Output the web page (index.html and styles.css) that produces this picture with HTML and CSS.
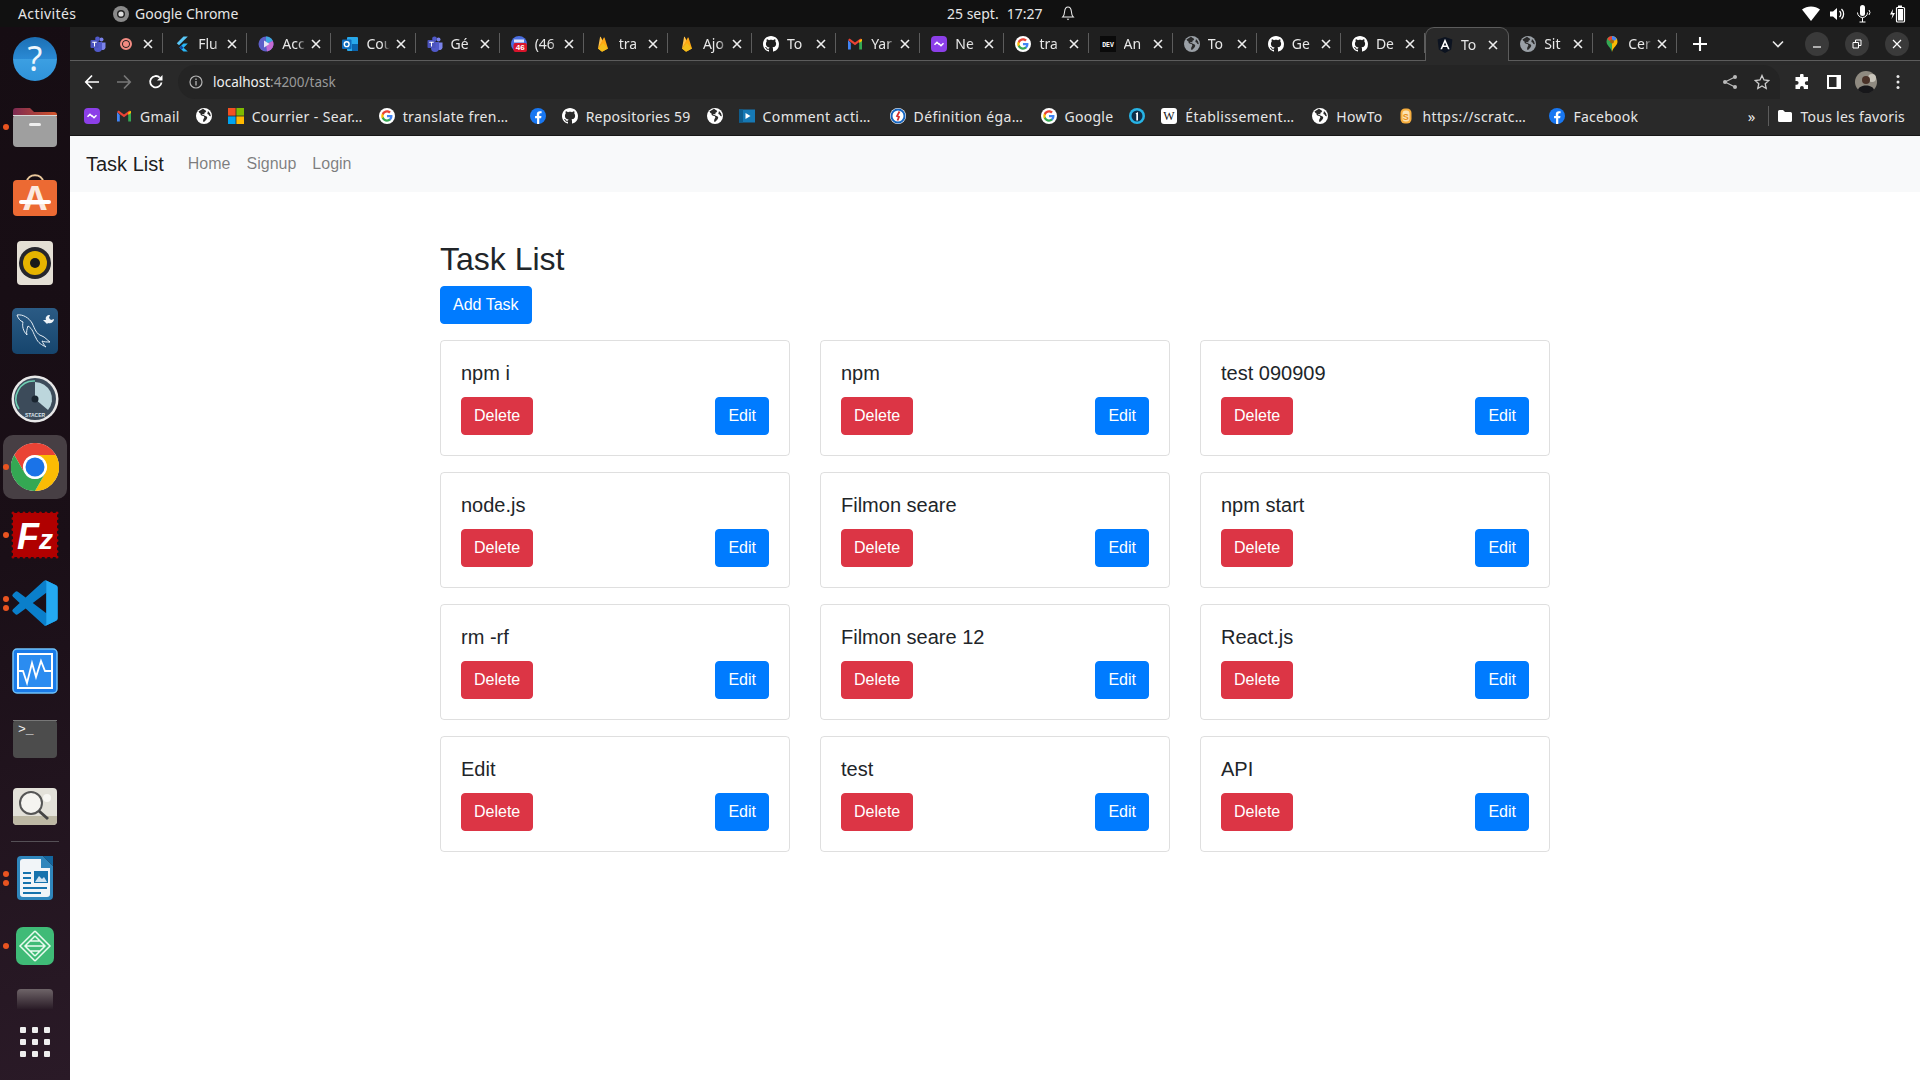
FILE: index.html
```html
<!DOCTYPE html>
<html lang="fr">
<head>
  <meta charset="UTF-8" />
  <title>Task List</title>
  <link rel="stylesheet" href="styles.css">
</head>
<body>
  <!-- favicon sprite -->
  <svg class="sprite" aria-hidden="true">
    <symbol id="i-teams" viewBox="0 0 16 16">
      <circle cx="11.5" cy="3.5" r="2" fill="#7b83eb"/><path d="M9 6.5h6.5v5a2.8 2.8 0 0 1-5 1.5z" fill="#7b83eb"/>
      <circle cx="7.5" cy="3" r="2.4" fill="#5059c9"/><path d="M4 6h8v6a4 4 0 0 1-8 0z" fill="#5059c9"/>
      <rect x="0.5" y="4" width="8" height="8" rx="1" fill="#4b53bc"/><path d="M2.3 5.8h4.4v1H5v3.8H4V6.8H2.3z" fill="#fff"/>
    </symbol>
    <symbol id="i-flutter" viewBox="0 0 16 16">
      <path d="M9.5.5h4.3L5 9.3 2.8 7.2z" fill="#5ac8f8"/><path d="M9.5 7.5h4.3L9.6 11.7l4.2 3.8H9.5L5.3 11.6z" fill="#29b6f6"/><path d="M7.4 9.6 9.6 11.7 7.4 13.8 5.3 11.6z" fill="#0d47a1"/>
    </symbol>
    <symbol id="i-copilot" viewBox="0 0 16 16">
      <circle cx="8" cy="8" r="7.5" fill="#5e5fc8"/><path d="M8 .5a7.5 7.5 0 0 1 6.9 4.6L8 8z" fill="#3fa7e0"/><path d="M14.9 5.1A7.5 7.5 0 0 1 9 15.4L8 8z" fill="#c56bd4"/><path d="M6 4.5 11.5 8 6 11.5z" fill="#e6e6f5"/>
    </symbol>
    <symbol id="i-outlook" viewBox="0 0 16 16">
      <rect x="5" y="1" width="11" height="14" rx="1" fill="#28a8ea"/><rect x="10" y="8" width="6" height="7" fill="#0a64ad"/>
      <rect x="0" y="3.5" width="9.5" height="9.5" rx="1" fill="#0f6cbd"/><circle cx="4.7" cy="8.2" r="2.4" fill="none" stroke="#fff" stroke-width="1.4"/>
    </symbol>
    <symbol id="i-cal" viewBox="0 0 16 16">
      <circle cx="8" cy="8" r="8" fill="#4a6ee0"/><rect x="3" y="3.5" width="10" height="3" fill="#dfe6fb"/><rect x="2.5" y="7" width="13.5" height="9" rx="2" fill="#d9142b"/>
      <text x="9.2" y="14.4" class="svg-num">46</text>
    </symbol>
    <symbol id="i-fire" viewBox="0 0 16 16">
      <path d="M3 12.5 5 1.2c.1-.4.6-.5.8-.1L8 5.2 3 12.5z" fill="#ffc24a"/><path d="M3 12.5 8.7 1.8c.2-.4.7-.4.9 0l3.4 10.7-5 2.8a1.6 1.6 0 0 1-1.6 0z" fill="#ffa712"/><path d="M3 12.5 8 7l5 5.5-5 2.8a1.6 1.6 0 0 1-1.6 0z" fill="#f4bd1b"/>
    </symbol>
    <symbol id="i-github" viewBox="0 0 16 16">
      <path fill="#fff" d="M8 0C3.58 0 0 3.58 0 8c0 3.54 2.29 6.53 5.47 7.59.4.07.55-.17.55-.38 0-.19-.01-.82-.01-1.49-2.01.37-2.53-.49-2.69-.94-.09-.23-.48-.94-.82-1.13-.28-.15-.68-.52-.01-.53.63-.01 1.08.58 1.23.82.72 1.21 1.87.87 2.33.66.07-.52.28-.87.51-1.07-1.78-.2-3.64-.89-3.64-3.95 0-.87.31-1.59.82-2.15-.08-.2-.36-1.02.08-2.12 0 0 .67-.21 2.2.82.64-.18 1.32-.27 2-.27.68 0 1.36.09 2 .27 1.53-1.04 2.2-.82 2.2-.82.44 1.1.16 1.92.08 2.12.51.56.82 1.27.82 2.15 0 3.07-1.87 3.75-3.65 3.95.29.25.54.73.54 1.48 0 1.07-.01 1.93-.01 2.2 0 .21.15.46.55.38A8.013 8.013 0 0016 8c0-4.42-3.58-8-8-8z"/>
    </symbol>
    <symbol id="i-gmail" viewBox="0 0 16 16">
      <path d="M1 4v9.5h2.8V7z" fill="#4285f4"/><path d="M12.2 7v6.5H15V4z" fill="#34a853"/><path d="M1 4l7 5.3L15 4l-1.6-1.5L8 6.5 2.6 2.5z" fill="#ea4335"/><path d="M12.2 4.5 15 2.8V5l-2.8 2z" fill="#fbbc04"/>
    </symbol>
    <symbol id="i-nexus" viewBox="0 0 16 16">
      <rect width="16" height="16" rx="4" fill="#8c3fe8"/><path d="M3.5 8.8 6 6.3l2.5 2.4M7.5 7.3 10 9.7l2.5-2.5" fill="none" stroke="#fff" stroke-width="1.5"/>
    </symbol>
    <symbol id="i-google" viewBox="0 0 24 24">
      <circle cx="12" cy="12" r="12" fill="#fff"/>
      <g transform="translate(2.6 2.6) scale(.78)">
        <path d="M22.56 12.25c0-.78-.07-1.53-.2-2.25H12v4.26h5.92c-.26 1.37-1.04 2.53-2.21 3.31v2.77h3.57c2.08-1.92 3.28-4.74 3.28-8.09z" fill="#4285f4"/>
        <path d="M12 23c2.97 0 5.46-.98 7.28-2.66l-3.57-2.77c-.98.66-2.23 1.06-3.71 1.06-2.86 0-5.29-1.93-6.16-4.53H2.18v2.84C3.99 20.53 7.7 23 12 23z" fill="#34a853"/>
        <path d="M5.84 14.09c-.22-.66-.35-1.36-.35-2.09s.13-1.43.35-2.09V7.07H2.18C1.43 8.55 1 10.22 1 12s.43 3.45 1.18 4.93l3.66-2.84z" fill="#fbbc05"/>
        <path d="M12 5.38c1.62 0 3.06.56 4.21 1.64l3.15-3.15C17.45 2.09 14.97 1 12 1 7.7 1 3.99 3.47 2.18 7.07l3.66 2.84c.87-2.6 3.3-4.53 6.16-4.53z" fill="#ea4335"/>
      </g>
    </symbol>
    <symbol id="i-dev" viewBox="0 0 16 16">
      <rect width="16" height="16" fill="#0a0a0a"/><text x="8" y="10.6" class="svg-dev">DEV</text>
    </symbol>
    <symbol id="i-globe" viewBox="0 0 16 16">
      <circle cx="8" cy="8" r="8" fill="currentColor"/>
      <path d="M7 .8 4.5 2.2 2.5 3.5 3.5 5l1 .6.2 1.4 1.3.7 1.6.2.8 1.3-.7 1.5-.6 1.2.2 2.2 1.3-.6 2-2.2.7-1.6-.6-1.3-1.8-.7-1.4-.7-1-.2-.4-.8 1.3-.1.5.5.7-.3-.4-1 1.3-.8.8-1.2z" fill="#2a2a2a"/>
      <path d="M12 3l2 2.3.9 3-1.4-.3-1-1.4-1.2-.6z" fill="#2a2a2a"/>
    </symbol>
    <symbol id="i-angular" viewBox="0 0 16 16">
      <path d="M8 0 .6 2.6 1.8 12.4 8 16l6.2-3.6 1.2-9.8z" fill="#0c1320"/>
      <path d="M8 1.8 3.4 12.2h1.7l.9-2.3h4l.9 2.3h1.7zM8 5.6l1.3 3H6.7z" fill="#fff"/>
    </symbol>
    <symbol id="i-maps" viewBox="0 0 16 16">
      <path d="M8 0a5.5 5.5 0 0 1 5.5 5.5C13.5 9.5 9.3 11 8 16z" fill="#fbbc04"/>
      <path d="M8 0A5.5 5.5 0 0 0 2.5 5.5C2.5 9.5 6.7 11 8 16z" fill="#34a853"/>
      <path d="M3.3 2.7A5.5 5.5 0 0 1 8 0l.5 3.3-3.2 1.7z" fill="#ea4335"/>
      <path d="M8 0a5.5 5.5 0 0 1 4.8 2.9L9.8 5 8 3.4z" fill="#4285f4"/>
      <circle cx="8" cy="5.5" r="2" fill="#a3660f"/>
    </symbol>
    <symbol id="i-ms" viewBox="0 0 16 16">
      <rect width="7.6" height="7.6" fill="#f25022"/><rect x="8.4" width="7.6" height="7.6" fill="#7fba00"/><rect y="8.4" width="7.6" height="7.6" fill="#00a4ef"/><rect x="8.4" y="8.4" width="7.6" height="7.6" fill="#ffb900"/>
    </symbol>
    <symbol id="i-fb" viewBox="0 0 24 24">
      <circle cx="12" cy="12" r="12" fill="#1877f2"/>
      <path d="M16.7 15.5l.5-3.5h-3.3V9.8c0-1 .5-1.9 2-1.9h1.5v-3s-1.4-.2-2.7-.2c-2.7 0-4.5 1.6-4.5 4.6V12H7.6v3.5h3V24h3.3v-8.5z" fill="#fff"/>
    </symbol>
    <symbol id="i-media" viewBox="0 0 16 16">
      <rect y="1.5" width="16" height="13" fill="#1679b5"/><rect y="1.5" width="4" height="13" fill="#0e5c8c"/><path d="M6.5 5l5 3-5 3z" fill="#fff"/>
    </symbol>
    <symbol id="i-def" viewBox="0 0 16 16">
      <circle cx="8" cy="8" r="8" fill="#fff"/><circle cx="8" cy="8" r="6.5" fill="none" stroke="#1565c0" stroke-width="2"/><path d="M9.5 3.5 7 8l2 1-1.5 3.5" fill="none" stroke="#d32f2f" stroke-width="1.8"/>
    </symbol>
    <symbol id="i-one" viewBox="0 0 16 16">
      <circle cx="8" cy="8" r="8" fill="#27b4e6"/><circle cx="8" cy="8" r="5.5" fill="#0f2f4a"/><path d="M6.5 5.5 9 4v8.5H7.3V6.3z" fill="#fff"/>
    </symbol>
    <symbol id="i-wiki" viewBox="0 0 16 16">
      <rect width="16" height="16" rx="3" fill="#fff"/><text x="8" y="12" class="svg-wiki">W</text>
    </symbol>
    <symbol id="i-scratch" viewBox="0 0 16 16">
      <rect x="2.5" y=".5" width="11" height="15" rx="4.5" fill="#f7ae3f"/><rect x="4.5" y="2.5" width="7" height="11" rx="3" fill="#fbe3b3"/><text x="8" y="11.6" class="svg-s">S</text>
    </symbol>
    <symbol id="i-x" viewBox="0 0 10 10">
      <path d="M1 1l8 8M9 1l-8 8" fill="none" stroke="currentColor" stroke-width="1.6"/>
    </symbol>
  </svg>

  <header class="topbar">
    <div class="top-left">
      <span class="activities">Activités</span>
      <svg class="app-badge" viewBox="0 0 16 16"><circle cx="8" cy="8" r="8" fill="#8a8a8a"/><circle cx="8" cy="8" r="4" fill="#222"/><circle cx="8" cy="8" r="2.6" fill="#dcdcdc"/></svg>
      <span>Google Chrome</span>
    </div>
    <div class="clock">
      <span>25 sept.</span>
      <span>17:27</span>
      <svg class="bell" viewBox="0 0 16 18"><path d="M8 1.500c-2.800 0-3.600 2.500-3.800 5-.2 2.500-.6 5-2.200 6.500h12c-1.600-1.500-2-4-2.200-6.500-.2-2.500-1-5-3.800-5z" fill="none" stroke="#eee" stroke-width="1.2"/><path d="M6.500 15h3l-1.500 1.800z" fill="#eee"/></svg>
    </div>
    <div class="tray">
      <svg viewBox="0 0 18 16"><path d="M0 3.500C5 -.5 13 -.5 18 3.500L9 15z" fill="#fff"/></svg>
      <svg viewBox="0 0 18 16"><path d="M1 5.500h3L8 2v12l-4-3.500H1z" fill="#fff"/><path d="M10.500 5a4 4 0 0 1 0 6M12.500 3a7 7 0 0 1 0 10" fill="none" stroke="#fff" stroke-width="1.3"/></svg>
      <svg viewBox="0 0 18 18"><rect x="4" y="0" width="5" height="11" rx="2.5" fill="#fff"/><path d="M1.500 7.500a5 5 0 0 0 10 0M6.500 13v4M3.500 17h6M13 5a4 4 0 0 1 0 5" fill="none" stroke="#fff" stroke-width="1"/></svg>
      <svg viewBox="0 0 18 18"><path d="M4 4 1 9.500h2.500L2.500 14l3.500-6H3.500z" fill="#fff"/><rect x="9" y="0.5" width="4" height="2" fill="#fff"/><rect x="7.5" y="2.5" width="8" height="14.5" rx="1" fill="none" stroke="#fff" stroke-width="1.2"/><rect x="9" y="4" width="5" height="11.5" fill="#fff"/></svg>
    </div>
  </header>

  <div class="desktop">
    <nav class="dock">
      <div class="dock-item">
        <svg viewBox="0 0 48 48"><defs><linearGradient id="g-help" x1="0" y1="0" x2="0" y2="1"><stop offset="0" stop-color="#1c6fb4"/><stop offset=".5" stop-color="#2a8ad4"/><stop offset=".5" stop-color="#3c9fe2"/><stop offset="1" stop-color="#2f93da"/></linearGradient></defs><circle cx="24" cy="24" r="22" fill="url(#g-help)"/><text x="24" y="36" class="svg-help">?</text></svg>
      </div>
      <div class="dock-item running">
        <svg viewBox="0 0 48 48"><defs><linearGradient id="g-fold" x1="0" y1="0" x2="1" y2="0"><stop offset="0" stop-color="#7d2a52"/><stop offset="1" stop-color="#d4552a"/></linearGradient></defs><path d="M2 8a3 3 0 0 1 3-3h14l4 4h20a3 3 0 0 1 3 3v14H2z" fill="url(#g-fold)"/><rect x="2" y="12" width="44" height="32" rx="4" fill="#9f9f9f"/><rect x="2" y="12" width="44" height="1" fill="#d8d8d8"/><rect x="18" y="20" width="12" height="3" rx="1.5" fill="#efefef"/></svg>
      </div>
      <div class="dock-item">
        <svg viewBox="0 0 48 48"><path d="M16 11c0-9 16-9 16 0" fill="none" stroke="#e9c79b" stroke-width="2"/><rect x="2" y="9" width="44" height="36" rx="4" fill="#ec6a33"/><text x="24" y="39" class="svg-soft">A</text><rect x="8" y="29" width="32" height="4" rx="2" fill="#fff"/></svg>
      </div>
      <div class="dock-item">
        <svg viewBox="0 0 48 48"><rect x="6" y="2" width="36" height="44" rx="4" fill="#e4dfd5"/><circle cx="24" cy="24" r="16" fill="#26262c"/><circle cx="24" cy="24" r="12" fill="#e6b400"/><circle cx="24" cy="24" r="5" fill="#1a1a1a"/></svg>
      </div>
      <div class="dock-item">
        <svg viewBox="0 0 48 48"><defs><linearGradient id="g-my" x1="0" y1="0" x2="0" y2="1"><stop offset="0" stop-color="#2b5b85"/><stop offset="1" stop-color="#16456d"/></linearGradient></defs><rect x="1" y="1" width="46" height="46" rx="5" fill="url(#g-my)"/><path d="M6 8c6-1 12 3 15 8 3 6 4 11 10 13 3 1 5 4 8 6-3 0-6 0-8-1 1 2 2 4 4 6-4-2-8-4-10-9-3-5-3-9-8-12-1 3-2 6-1 9-4-4-5-9-4-13-3-1-5-4-6-7z" fill="none" stroke="#e6eef4" stroke-width="1"/><path d="M32 13l4 4 1-1c3 1 6-1 6-4l-3 1-2-2 1-3c-3 0-5 2-4 5z" fill="#eef3f7"/></svg>
      </div>
      <div class="dock-item">
        <svg viewBox="0 0 48 48"><circle cx="24" cy="24" r="23.5" fill="#e8e8e8"/><circle cx="24" cy="24" r="21" fill="#3c4b5a"/><path d="M8 34A18 18 0 0 1 24 6" fill="none" stroke="#6fd0b4" stroke-width="1.6"/><path d="M24 24 24 7a17 17 0 0 1 13 28z" fill="#bcd6dc"/><circle cx="24" cy="24" r="3.5" fill="#1a2530"/><text x="24" y="42" class="svg-stacer">STACER</text></svg>
      </div>
      <div class="dock-item running active">
        <svg viewBox="0 0 48 48"><circle cx="24" cy="24" r="24" fill="#fff"/><path d="M3.2 12A24 24 0 0 1 44.8 12H24a12 12 0 0 0-10.4 18z" fill="#ea4335"/><path d="M3.2 12A24 24 0 0 1 44.8 12H24a12 12 0 0 0-10.4 18z" fill="#fbbc04" transform="rotate(120 24 24)"/><path d="M3.2 12A24 24 0 0 1 44.8 12H24a12 12 0 0 0-10.4 18z" fill="#34a853" transform="rotate(240 24 24)"/><circle cx="24" cy="24" r="11.5" fill="#fff"/><circle cx="24" cy="24" r="9.5" fill="#1a73e8"/></svg>
      </div>
      <div class="dock-item running">
        <svg viewBox="0 0 48 48"><rect x="2" y="2" width="44" height="44" fill="#a80000" stroke="#a80000" stroke-width="3" stroke-dasharray="0 5.5" stroke-linecap="round"/><rect x="2" y="2" width="44" height="44" fill="#b00000"/><text x="6" y="38" class="svg-fz">F<tspan class="svg-fz-small">z</tspan></text></svg>
      </div>
      <div class="dock-item running double">
        <svg viewBox="-3 -3 106 106"><path d="M96.5 10.8 75.9.9a6.2 6.2 0 0 0-7.1 1.2L29.3 38.1 12.1 25a4.2 4.2 0 0 0-5.3.2L1.4 30.2a4.2 4.2 0 0 0 0 6.2L16.2 50 1.4 63.6a4.2 4.2 0 0 0 0 6.2l5.5 5a4.2 4.2 0 0 0 5.3.2l17.2-13.1 39.5 36a6.2 6.2 0 0 0 7.1 1.2l20.6-9.9A6.2 6.2 0 0 0 100 83.6V16.4a6.2 6.2 0 0 0-3.5-5.6zM75 72.7 45.1 50 75 27.3z" fill="#0a7fcb"/><path d="M75.9.9 96.5 10.8A6.2 6.2 0 0 1 100 16.4v67.2a6.2 6.2 0 0 1-3.5 5.6L75.9 99.1a6.2 6.2 0 0 1-7.1-1.2C71 100 75 98.5 75 95.5v-91C75 1.5 71 0 68.8 2.1A6.2 6.2 0 0 1 75.9.9z" fill="#24a9f2"/></svg>
      </div>
      <div class="dock-item">
        <svg viewBox="0 0 48 48"><rect x="2" y="2" width="44" height="44" rx="4" fill="#1a7be8" stroke="#6fc2fb" stroke-width="1.5"/><rect x="6" y="6" width="36" height="36" fill="#fff"/><rect x="8" y="8" width="32" height="32" fill="#2b8cf0"/><path d="M8 24h4l4 12 5-20 4 14 5-16 4 10h6" fill="none" stroke="#fff" stroke-width="1.8"/></svg>
      </div>
      <div class="dock-item">
        <svg viewBox="0 0 48 48"><rect x="2" y="5" width="44" height="38" rx="4" fill="#4c4c4c"/><rect x="2" y="5" width="44" height="1" fill="#777"/><text x="7" y="18" class="svg-term">&gt;_</text></svg>
      </div>
      <div class="dock-item">
        <svg viewBox="0 0 48 48"><rect x="2" y="5" width="44" height="37" rx="4" fill="#e3e1d9"/><path d="M2 33h44v5a4 4 0 0 1-4 4H6a4 4 0 0 1-4-4z" fill="#bdb8a4"/><circle cx="36" cy="15" r="4" fill="#f7f6f2"/><circle cx="20" cy="20" r="11" fill="#f5f4f0" stroke="#555" stroke-width="2"/><path d="M28 28l9 8" stroke="#444" stroke-width="3"/></svg>
      </div>
      <div class="dock-sep"></div>
      <div class="dock-item running double">
        <svg viewBox="0 0 48 48"><path d="M6 6a4 4 0 0 1 4-4h22l10 10v30a4 4 0 0 1-4 4H10a4 4 0 0 1-4-4z" fill="#2f86bc"/><path d="M9 8a3 3 0 0 1 3-3h18v9h9v26a3 3 0 0 1-3 3H12a3 3 0 0 1-3-3z" fill="#f1f5f8"/><path d="M32 2h10v10z" fill="#13669e"/><path d="M12 18h8v2h-8zM12 23h8v2h-8zM12 28h8v2h-8zM12 33h24v2H12zM12 38h18v2H12z" fill="#1673ad"/><rect x="23" y="17" width="14" height="12" fill="#1673ad"/><path d="M24 28l4-6 3 3 2-2 3 5z" fill="#cfe3f1"/></svg>
      </div>
      <div class="dock-item running">
        <svg viewBox="0 0 48 48"><rect x="5" y="5" width="38" height="38" rx="7" fill="#3fbb77"/><path d="M24 9 9 24l15 15M24 9l15 15-15 15M19 19h10M15 24h18M19 29h10M24 14 14 24l10 10M24 14l10 10-10 10" fill="none" stroke="#eafbf1" stroke-width="1.5"/></svg>
      </div>
      <div class="dock-item short">
        <svg viewBox="0 0 48 28"><defs><linearGradient id="g-drive" x1="0" y1="0" x2="0" y2="1"><stop offset="0" stop-color="#6e6468"/><stop offset="1" stop-color="#2a1c27"/></linearGradient></defs><path d="M6 22V6a4 4 0 0 1 4-4h28a4 4 0 0 1 4 4v16z" fill="url(#g-drive)"/></svg>
      </div>
      <div class="dock-grid">
        <i></i><i></i><i></i><i></i><i></i><i></i><i></i><i></i><i></i>
      </div>
    </nav>

    <div class="window">
      <div class="tabstrip">
        <div class="tab"><svg class="fav"><use href="#i-teams"/></svg><span class="rec"></span><svg class="tab-x"><use href="#i-x"/></svg></div>
        <div class="tab"><svg class="fav"><use href="#i-flutter"/></svg><span class="tab-title">Flu</span><svg class="tab-x"><use href="#i-x"/></svg></div>
        <div class="tab"><svg class="fav"><use href="#i-copilot"/></svg><span class="tab-title">Acc</span><svg class="tab-x"><use href="#i-x"/></svg></div>
        <div class="tab"><svg class="fav"><use href="#i-outlook"/></svg><span class="tab-title">Cou</span><svg class="tab-x"><use href="#i-x"/></svg></div>
        <div class="tab"><svg class="fav"><use href="#i-teams"/></svg><span class="tab-title">Gé</span><svg class="tab-x"><use href="#i-x"/></svg></div>
        <div class="tab"><svg class="fav"><use href="#i-cal"/></svg><span class="tab-title">(46</span><svg class="tab-x"><use href="#i-x"/></svg></div>
        <div class="tab"><svg class="fav"><use href="#i-fire"/></svg><span class="tab-title">tra</span><svg class="tab-x"><use href="#i-x"/></svg></div>
        <div class="tab"><svg class="fav"><use href="#i-fire"/></svg><span class="tab-title">Ajo</span><svg class="tab-x"><use href="#i-x"/></svg></div>
        <div class="tab"><svg class="fav"><use href="#i-github"/></svg><span class="tab-title">To</span><svg class="tab-x"><use href="#i-x"/></svg></div>
        <div class="tab"><svg class="fav"><use href="#i-gmail"/></svg><span class="tab-title">Yar</span><svg class="tab-x"><use href="#i-x"/></svg></div>
        <div class="tab"><svg class="fav"><use href="#i-nexus"/></svg><span class="tab-title">Ne</span><svg class="tab-x"><use href="#i-x"/></svg></div>
        <div class="tab"><svg class="fav"><use href="#i-google"/></svg><span class="tab-title">tra</span><svg class="tab-x"><use href="#i-x"/></svg></div>
        <div class="tab"><svg class="fav"><use href="#i-dev"/></svg><span class="tab-title">An</span><svg class="tab-x"><use href="#i-x"/></svg></div>
        <div class="tab"><svg class="fav globe-dim"><use href="#i-globe"/></svg><span class="tab-title">To</span><svg class="tab-x"><use href="#i-x"/></svg></div>
        <div class="tab"><svg class="fav"><use href="#i-github"/></svg><span class="tab-title">Ge</span><svg class="tab-x"><use href="#i-x"/></svg></div>
        <div class="tab"><svg class="fav"><use href="#i-github"/></svg><span class="tab-title">De</span><svg class="tab-x"><use href="#i-x"/></svg></div>
        <div class="tab active"><svg class="fav"><use href="#i-angular"/></svg><span class="tab-title">To</span><svg class="tab-x"><use href="#i-x"/></svg></div>
        <div class="tab"><svg class="fav globe-dim"><use href="#i-globe"/></svg><span class="tab-title">Sit</span><svg class="tab-x"><use href="#i-x"/></svg></div>
        <div class="tab"><svg class="fav"><use href="#i-maps"/></svg><span class="tab-title">Cer</span><svg class="tab-x"><use href="#i-x"/></svg></div>
        <svg class="new-tab" viewBox="0 0 12 12"><path d="M6 0v12M0 6h12" stroke="#fff" stroke-width="1.8"/></svg>
        <div class="win-controls">
          <svg class="tab-list" viewBox="0 0 12 8"><path d="M1 1.500 6 6.500l5-5" fill="none" stroke="#e8e8e8" stroke-width="1.6"/></svg>
          <span class="win-btn"><svg viewBox="0 0 10 10"><path d="M1 8h8" stroke="#fff" stroke-width="1.2"/></svg></span>
          <span class="win-btn"><svg viewBox="0 0 10 10"><path d="M1 3.500h5.500V9H1zM3.500 3V1H9v5.500H7" fill="none" stroke="#fff" stroke-width="1"/></svg></span>
          <span class="win-btn"><svg viewBox="0 0 10 10"><path d="M1 1l8 8M9 1l-8 8" stroke="#fff" stroke-width="1.2"/></svg></span>
        </div>
      </div>

      <div class="toolbar">
        <svg class="tb-ico" viewBox="0 0 16 16"><path d="M15 8H2M8 1.500 1.800 8 8 14.500" fill="none" stroke="#fff" stroke-width="1.7"/></svg>
        <svg class="tb-ico" viewBox="0 0 16 16"><path d="M1 8h13M8 1.500 14.200 8 8 14.500" fill="none" stroke="#777" stroke-width="1.7"/></svg>
        <svg class="tb-ico" viewBox="0 0 16 16"><path d="M13.500 8.500A5.700 5.700 0 1 1 11.800 3.600" fill="none" stroke="#fff" stroke-width="1.8"/><path d="M14.500 1v5.500H9z" fill="#fff"/></svg>
        <div class="omnibox">
          <svg class="info" viewBox="0 0 14 14"><circle cx="7" cy="7" r="6" fill="none" stroke="#b5b5b5" stroke-width="1.2"/><path d="M7 6v4.500M7 3.500v1.400" stroke="#b5b5b5" stroke-width="1.3"/></svg>
          <span class="url"><b>localhost</b>:4200/task</span>
          <svg class="omni-ico share" viewBox="0 0 16 16"><circle cx="13" cy="3" r="2" fill="#bbb"/><circle cx="3" cy="8" r="2" fill="#bbb"/><circle cx="13" cy="13" r="2" fill="#bbb"/><path d="M13 3 3 8l10 5" fill="none" stroke="#bbb" stroke-width="1.2"/></svg>
          <svg class="omni-ico" viewBox="0 0 16 16"><path d="M8 1.500 10 6l4.800.5-3.600 3.200 1 4.800L8 12l-4.200 2.500 1-4.800L1.200 6.500 6 6z" fill="none" stroke="#ccc" stroke-width="1.3"/></svg>
        </div>
        <div class="tb-right">
          <svg class="tb-ico" viewBox="0 0 16 16"><path d="M6 1.500a1.800 1.800 0 0 1 3.600 0V3H14v4.200h-1.300a1.900 1.900 0 0 0 0 3.800H14v4H9.800v-1.200a1.900 1.900 0 0 0-3.800 0V15H1.500v-4.300h1.200a1.900 1.900 0 0 0 0-3.800H1.500V3H6z" fill="#fff"/></svg>
          <svg class="tb-ico panel-ico" viewBox="0 0 16 16"><path d="M1 1h14v14H1z" fill="#fff"/><rect x="3" y="3" width="7.5" height="10" fill="#292929"/></svg>
          <svg class="avatar" viewBox="0 0 22 22"><circle cx="11" cy="11" r="11" fill="#8f8a80"/><circle cx="17" cy="7" r="4" fill="#c9c5bb"/><circle cx="11" cy="9" r="4" fill="#4a3228"/><path d="M3 19c1-6 15-6 16 0a11 11 0 0 1-16 0z" fill="#17171a"/></svg>
          <svg class="tb-ico dots" viewBox="0 0 4 16"><circle cx="2" cy="2.500" r="1.500" fill="#e8e8e8"/><circle cx="2" cy="8" r="1.500" fill="#e8e8e8"/><circle cx="2" cy="13.500" r="1.500" fill="#e8e8e8"/></svg>
        </div>
      </div>

      <div class="bookmarks">
        <div class="bm"><svg class="fav"><use href="#i-nexus"/></svg></div>
        <div class="bm"><svg class="fav"><use href="#i-gmail"/></svg><span>Gmail</span></div>
        <div class="bm"><svg class="fav globe-white"><use href="#i-globe"/></svg></div>
        <div class="bm long"><svg class="fav"><use href="#i-ms"/></svg><span>Courrier - Sear…</span></div>
        <div class="bm long"><svg class="fav"><use href="#i-google"/></svg><span>translate fren…</span></div>
        <div class="bm"><svg class="fav"><use href="#i-fb"/></svg></div>
        <div class="bm"><svg class="fav"><use href="#i-github"/></svg><span>Repositories 59</span></div>
        <div class="bm"><svg class="fav globe-white"><use href="#i-globe"/></svg></div>
        <div class="bm long"><svg class="fav"><use href="#i-media"/></svg><span>Comment acti…</span></div>
        <div class="bm long"><svg class="fav"><use href="#i-def"/></svg><span>Définition éga…</span></div>
        <div class="bm"><svg class="fav"><use href="#i-google"/></svg><span>Google</span></div>
        <div class="bm"><svg class="fav"><use href="#i-one"/></svg></div>
        <div class="bm long"><svg class="fav"><use href="#i-wiki"/></svg><span>Établissement…</span></div>
        <div class="bm"><svg class="fav globe-white"><use href="#i-globe"/></svg><span>HowTo</span></div>
        <div class="bm long"><svg class="fav"><use href="#i-scratch"/></svg><span>https://scratc…</span></div>
        <div class="bm"><svg class="fav"><use href="#i-fb"/></svg><span>Facebook</span></div>
        <div class="bm-end">
          <span class="more">»</span>
          <span class="bm-sep"></span>
          <div class="bm">
            <svg class="fav" viewBox="0 0 16 16"><path d="M1 3.500A1.500 1.500 0 0 1 2.500 2H6l2 2h5.500A1.500 1.500 0 0 1 15 5.500v7a1.500 1.500 0 0 1-1.500 1.500h-11A1.500 1.500 0 0 1 1 12.500z" fill="#fff"/></svg>
            <span>Tous les favoris</span>
          </div>
        </div>
      </div>

      <main class="page">
        <nav class="navbar">
          <a class="navbar-brand" href="#">Task List</a>
          <a class="nav-link" href="#">Home</a>
          <a class="nav-link" href="#">Signup</a>
          <a class="nav-link" href="#">Login</a>
        </nav>
        <section class="container">
          <h2>Task List</h2>
          <button class="btn btn-primary">Add Task</button>
          <div class="task-grid">
            <div class="card"><h5>npm i</h5><div class="card-actions"><button class="btn btn-danger">Delete</button><button class="btn btn-primary">Edit</button></div></div>
            <div class="card"><h5>npm</h5><div class="card-actions"><button class="btn btn-danger">Delete</button><button class="btn btn-primary">Edit</button></div></div>
            <div class="card"><h5>test 090909</h5><div class="card-actions"><button class="btn btn-danger">Delete</button><button class="btn btn-primary">Edit</button></div></div>
            <div class="card"><h5>node.js</h5><div class="card-actions"><button class="btn btn-danger">Delete</button><button class="btn btn-primary">Edit</button></div></div>
            <div class="card"><h5>Filmon seare</h5><div class="card-actions"><button class="btn btn-danger">Delete</button><button class="btn btn-primary">Edit</button></div></div>
            <div class="card"><h5>npm start</h5><div class="card-actions"><button class="btn btn-danger">Delete</button><button class="btn btn-primary">Edit</button></div></div>
            <div class="card"><h5>rm -rf</h5><div class="card-actions"><button class="btn btn-danger">Delete</button><button class="btn btn-primary">Edit</button></div></div>
            <div class="card"><h5>Filmon seare 12</h5><div class="card-actions"><button class="btn btn-danger">Delete</button><button class="btn btn-primary">Edit</button></div></div>
            <div class="card"><h5>React.js</h5><div class="card-actions"><button class="btn btn-danger">Delete</button><button class="btn btn-primary">Edit</button></div></div>
            <div class="card"><h5>Edit</h5><div class="card-actions"><button class="btn btn-danger">Delete</button><button class="btn btn-primary">Edit</button></div></div>
            <div class="card"><h5>test</h5><div class="card-actions"><button class="btn btn-danger">Delete</button><button class="btn btn-primary">Edit</button></div></div>
            <div class="card"><h5>API</h5><div class="card-actions"><button class="btn btn-danger">Delete</button><button class="btn btn-primary">Edit</button></div></div>
          </div>
        </section>
      </main>
    </div>
  </div>
</body>
</html>
```

FILE: styles.css
```css
* {
  box-sizing: border-box;
}
html, body {
  height: 100%;
}
body {
  margin: 0;
  overflow: hidden;
  background: #fff;
  color: #212529;
  font-family: "Liberation Sans", Arial, sans-serif;
  font-size: 16px;
}
.sprite {
  display: none;
}

/* system top bar */
.topbar {
  display: flex;
  align-items: center;
  height: 27px;
  background: #111;
  color: #e6e6e6;
  font-family: "Noto Sans", sans-serif;
  font-size: 14px;
}
.top-left {
  display: flex;
  align-items: center;
  width: 947px;
  padding-left: 18px;
}
.activities {
  width: 95px;
  letter-spacing: .4px;
}
.app-badge {
  width: 16px;
  height: 16px;
  margin-right: 6px;
}
.clock {
  display: flex;
  align-items: center;
  gap: 8px;
}
.bell {
  width: 14px;
  height: 17px;
  margin-left: 11px;
}
.tray {
  display: flex;
  align-items: center;
  gap: 9px;
  margin-left: auto;
  padding-right: 13px;
}
.tray svg {
  width: 18px;
  height: 18px;
}
.tray svg:last-child {
  margin-left: 6px;
}

/* dock */
.desktop {
  display: flex;
  height: 1053px;
}
.dock {
  flex: 0 0 70px;
  background: linear-gradient(165deg, #160d13 0%, #1a0f17 50%, #2a1a27 100%);
}
.dock-item {
  position: relative;
  display: flex;
  align-items: center;
  justify-content: center;
  height: 68px;
}
.dock-item:first-child {
  margin-top: -2px;
}
.dock-item svg {
  position: relative;
  width: 48px;
  height: 48px;
}
.dock-item.short {
  height: 42px;
}
.dock-item.short svg {
  height: 28px;
}
.dock-item.active::before {
  content: "";
  position: absolute;
  left: 3px;
  top: 2px;
  width: 64px;
  height: 64px;
  border-radius: 10px;
  background: #473f44;
}
.dock-item.running::after {
  content: "";
  position: absolute;
  left: 3px;
  top: 31px;
  width: 6px;
  height: 6px;
  border-radius: 50%;
  background: #e95420;
}
.dock-item.double::after {
  top: 27px;
  box-shadow: 0 9px 0 #e95420;
}
.dock-sep {
  height: 1px;
  margin: 0 11px 2px;
  background: #555056;
}
.dock-grid {
  display: grid;
  grid-template-columns: repeat(3, 6px);
  gap: 6px;
  justify-content: center;
  padding-top: 5px;
}
.dock-grid i {
  height: 6px;
  border-radius: 1px;
  background: #eee;
}

/* browser */
.window {
  flex: 1;
  min-width: 0;
  display: flex;
  flex-direction: column;
}
.tabstrip {
  display: flex;
  align-items: center;
  height: 34px;
  padding-left: 9px;
  background: #1f1f1f;
  border-bottom: 1px solid #5c5c5c;
  font-family: "Noto Sans", sans-serif;
  font-size: 14px;
  color: #e8e8e8;
}
.tab {
  position: relative;
  display: flex;
  align-items: center;
  flex: 0 0 84.13px;
  height: 33px;
  padding-left: 11px;
}
.tab::after {
  content: "";
  position: absolute;
  right: 0;
  top: 6px;
  height: 20px;
  width: 1px;
  background: #5c5c5c;
}
.tab.active {
  height: 34px;
  margin-bottom: -1px;
  background: #292929;
  border: 1px solid #5c5c5c;
  border-bottom: 0;
  border-radius: 9px 9px 0 0;
  z-index: 1;
}
.tab.active::after {
  display: none;
}
.fav {
  flex: 0 0 16px;
  width: 16px;
  height: 16px;
}
.globe-dim {
  color: #9aa0a6;
}
.globe-white {
  color: #fff;
}
.tab-title {
  width: 27px;
  margin-left: 8px;
  white-space: nowrap;
  -webkit-mask-image: linear-gradient(90deg, #000 16px, transparent 24px);
  mask-image: linear-gradient(90deg, #000 16px, transparent 24px);
}
.rec {
  width: 12px;
  height: 12px;
  margin-left: 14px;
  border-radius: 50%;
  background: #f28b82;
  border: 2px solid #f28b82;
  box-shadow: inset 0 0 0 1px #1f1f1f;
}
.tab-x {
  width: 10px;
  height: 10px;
  margin-left: auto;
  margin-right: 10px;
  color: #eee;
}
.new-tab {
  width: 14px;
  height: 14px;
  margin-left: 16px;
}
.win-controls {
  display: flex;
  align-items: center;
  margin-left: auto;
  padding-right: 11px;
}
.tab-list {
  width: 12px;
  height: 8px;
  margin-right: 21px;
}
.win-btn {
  display: flex;
  align-items: center;
  justify-content: center;
  width: 24px;
  height: 24px;
  margin-left: 16px;
  border-radius: 50%;
  background: #3a3a3a;
}
.tab-list + .win-btn {
  margin-left: 0;
}
.win-btn svg {
  width: 10px;
  height: 10px;
}

.toolbar {
  display: flex;
  align-items: flex-end;
  height: 38px;
  padding-left: 14px;
  background: #292929;
}
.toolbar > .tb-ico {
  align-self: center;
  margin-top: 3px;
}
.tb-ico {
  width: 16px;
  height: 16px;
  margin-right: 16px;
}
.toolbar > .tb-ico:nth-child(3) {
  margin-right: 14px;
}
.omnibox {
  display: flex;
  align-items: center;
  width: 1602px;
  height: 34px;
  padding: 0 10px 0 11px;
  border-radius: 17px 17px 0 17px;
  background: #242424;
  font-family: "Noto Sans", sans-serif;
  font-size: 13.5px;
}
.info {
  width: 14px;
  height: 14px;
  margin-right: 10px;
}
.url {
  color: #9a9a9a;
}
.url b {
  font-weight: 400;
  color: #f0f0f0;
}
.omni-ico {
  width: 16px;
  height: 16px;
  margin-left: 16px;
}
.omni-ico.share {
  margin-left: auto;
}
.tb-right {
  display: flex;
  align-items: center;
  flex: 1;
  height: 34px;
  padding-left: 14px;
}
.tb-ico.panel-ico {
  margin-right: 13px;
}
.avatar {
  width: 22px;
  height: 22px;
  margin-right: 19px;
}
.tb-ico.dots {
  width: 4px;
  margin-right: 0;
}

.bookmarks {
  display: flex;
  align-items: center;
  gap: 16px;
  height: 37px;
  padding: 0 0 2px 14px;
  background: #292929;
  border-bottom: 1px solid #161616;
  font-family: "Noto Sans", sans-serif;
  font-size: 14px;
  letter-spacing: .25px;
  color: #e6e6e6;
}
.bm {
  display: flex;
  align-items: center;
  gap: 8px;
  white-space: nowrap;
}
.bm.long span {
  width: 111px;
  letter-spacing: .4px;
}
.bm-end {
  display: flex;
  align-items: center;
  margin-left: auto;
  padding-right: 15px;
}
.more {
  margin-right: 12px;
  font-size: 15px;
}
.bm-sep {
  width: 1px;
  height: 20px;
  margin-right: 8px;
  background: #5c5c5c;
}

/* svg text */
.svg-num {
  font: 700 8px "Liberation Sans", sans-serif;
  fill: #fff;
  text-anchor: middle;
}
.svg-dev {
  font: 700 6.5px "Liberation Mono", monospace;
  fill: #fff;
  text-anchor: middle;
}
.svg-wiki {
  font: 400 12px "Liberation Serif", serif;
  fill: #111;
  text-anchor: middle;
}
.svg-s {
  font: 700 9px "Liberation Sans", sans-serif;
  fill: #e8901a;
  text-anchor: middle;
}
.svg-help {
  font: 400 34px "Noto Sans", sans-serif;
  fill: #eef6fc;
  text-anchor: middle;
}
.svg-soft {
  font: 700 34px "Noto Sans", sans-serif;
  fill: #fbe9df;
  text-anchor: middle;
}
.svg-stacer {
  font: 700 5px "Liberation Sans", sans-serif;
  fill: #d8e2ea;
  text-anchor: middle;
}
.svg-fz {
  font: italic 700 36px "Liberation Sans", sans-serif;
  fill: #fff;
}
.svg-fz-small {
  font-size: 28px;
}
.svg-term {
  font: 400 13px "Liberation Mono", monospace;
  fill: #f0f0f0;
}

/* page */
.page {
  flex: 1;
  background: #fff;
}
.navbar {
  display: flex;
  align-items: center;
  height: 56px;
  padding: 8px 16px;
  background: #f8f9fa;
}
.navbar-brand {
  margin-right: 16px;
  font-size: 20px;
  color: rgba(0, 0, 0, .9);
  text-decoration: none;
}
.nav-link {
  padding: 8px;
  color: rgba(0, 0, 0, .5);
  text-decoration: none;
}
.container {
  width: 1110px;
  margin: 48px auto 0;
}
h2 {
  margin: 0 0 8px;
  font-size: 32px;
  font-weight: 400;
  line-height: 1.2;
}
.btn {
  display: inline-block;
  padding: 6px 12px;
  border: 1px solid transparent;
  border-radius: 4px;
  font-family: inherit;
  font-size: 16px;
  line-height: 1.5;
  color: #fff;
  cursor: pointer;
}
.btn-primary {
  background: #007bff;
  border-color: #007bff;
}
.btn-danger {
  background: #dc3545;
  border-color: #dc3545;
}
.task-grid {
  display: grid;
  grid-template-columns: repeat(3, 350px);
  gap: 16px 30px;
  margin-top: 16px;
}
.card {
  padding: 20px;
  border: 1px solid rgba(0, 0, 0, .125);
  border-radius: 4px;
}
h5 {
  margin: 0 0 12px;
  font-size: 20px;
  font-weight: 400;
  line-height: 1.2;
}
.card-actions {
  display: flex;
  justify-content: space-between;
}
```
